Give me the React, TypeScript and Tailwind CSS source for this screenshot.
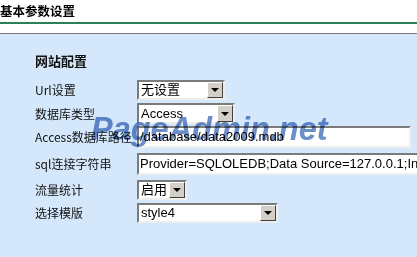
import React from 'react'

const cjk = { fontFamily: '"Noto Sans CJK SC", "Liberation Sans", sans-serif' }

function Arrow() {
  return (
    <div className="flex h-full w-[16px] items-center justify-center border border-t-white border-l-white border-b-[#404040] border-r-[#404040] bg-[#d4d0c8]">
      <div className="h-0 w-0 border-x-[4px] border-t-[4px] border-x-transparent border-t-black" />
    </div>
  )
}

function FakeSelect({ value, className }: { value: string; className: string }) {
  return (
    <div
      className={`flex items-stretch border-2 border-t-[#7b7b7b] border-l-[#7b7b7b] border-b-[#eeeeee] border-r-[#eeeeee] bg-white ${className}`}
    >
      <span
        className="flex flex-1 items-center overflow-hidden whitespace-nowrap pl-[2px] text-[13px] text-black"
        style={{ fontFamily: '"Liberation Sans", "Noto Sans CJK SC", sans-serif' }}
      >
        {value}
      </span>
      <Arrow />
    </div>
  )
}

function TextBox({ value, className }: { value: string; className: string }) {
  return (
    <div
      className={`flex items-center overflow-hidden whitespace-nowrap border-2 border-t-[#7b7b7b] border-l-[#7b7b7b] border-b-[#eeeeee] border-r-[#eeeeee] bg-white pl-[1px] text-[13px] text-black ${className}`}
      style={{ fontFamily: '"Liberation Sans", sans-serif' }}
    >
      {value}
    </div>
  )
}

function Row({ label, mt, children }: { label: string; mt: string; children: React.ReactNode }) {
  return (
    <div className={`flex items-center ${mt}`}>
      <div className="w-[102px] shrink-0 whitespace-nowrap text-[12px] text-[#111]" style={cjk}>
        {label}
      </div>
      {children}
    </div>
  )
}

export default function App() {
  return (
    <div className="relative flex h-[257px] w-[417px] flex-col overflow-hidden bg-white">
      <div className="flex h-[22px] items-center pt-[1px]">
        <span className="text-[12.5px] font-bold leading-none text-black" style={cjk}>
          基本参数设置
        </span>
      </div>
      <div className="h-[2px] bg-[#2e7d5b]" />
      <div className="h-[9px] bg-white" />
      <div className="h-[1px] bg-[#7c7c7c]" />
      <div className="min-w-0 flex-1 bg-[#d5e8fb] pl-[35px]">
        <div className="mt-[19px] h-[16px] text-[13px] font-bold leading-[16px] text-[#111]" style={cjk}>
          网站配置
        </div>
        <Row label="Url设置" mt="mt-[11px]">
          <FakeSelect value="无设置" className="h-[20px] w-[88px]" />
        </Row>
        <Row label="数据库类型" mt="mt-[3px]">
          <FakeSelect value="Access" className="h-[21px] w-[98px]" />
        </Row>
        <Row label="Access数据库路径" mt="mt-[2px]">
          <TextBox value="/database/data2009.mdb" className="h-[22px] w-[274px]" />
        </Row>
        <Row label="sql连接字符串" mt="mt-[5px]">
          <TextBox value="Provider=SQLOLEDB;Data Source=127.0.0.1;Initial Catalog=pageadmin" className="h-[22px] w-[320px] shrink-0" />
        </Row>
        <Row label="流量统计" mt="mt-[5px]">
          <FakeSelect value="启用" className="h-[20px] w-[50px]" />
        </Row>
        <Row label="选择模版" mt="mt-[3px]">
          <FakeSelect value="style4" className="h-[20px] w-[141px]" />
        </Row>
      </div>
      <div
        className="pointer-events-none absolute left-[91px] top-[113px] text-[32.5px] font-bold italic leading-none text-[rgba(72,115,188,0.8)] mix-blend-multiply"
        style={{ fontFamily: '"Liberation Sans", sans-serif' }}
      >
        PageAdmin.net
      </div>
    </div>
  )
}
